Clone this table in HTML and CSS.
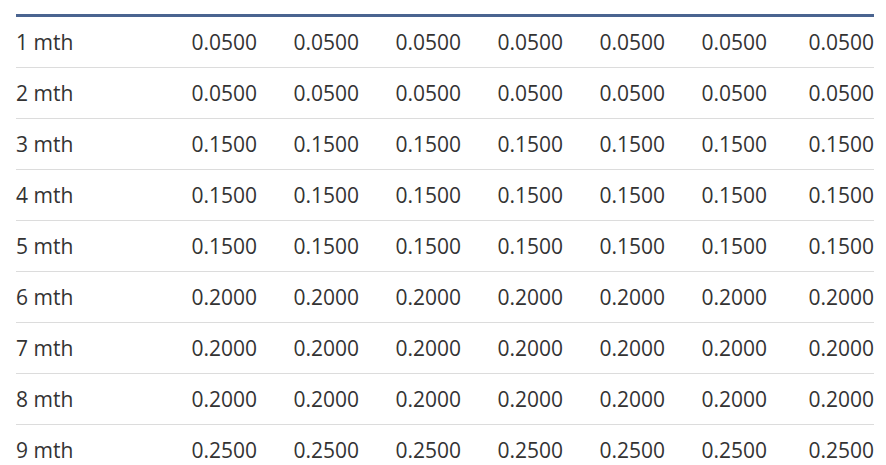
FILE: index.html
```html
<!DOCTYPE html>
<html>
<head>
<meta charset="utf-8">
<link rel="stylesheet" href="styles.css">
</head>
<body>
<table class="rates">
  <colgroup>
    <col class="c-label">
    <col class="c-num"><col class="c-num"><col class="c-num"><col class="c-num"><col class="c-num"><col class="c-num"><col class="c-num">
  </colgroup>
  <tbody>
    <tr><td>1 mth</td><td>0.0500</td><td>0.0500</td><td>0.0500</td><td>0.0500</td><td>0.0500</td><td>0.0500</td><td>0.0500</td></tr>
    <tr><td>2 mth</td><td>0.0500</td><td>0.0500</td><td>0.0500</td><td>0.0500</td><td>0.0500</td><td>0.0500</td><td>0.0500</td></tr>
    <tr><td>3 mth</td><td>0.1500</td><td>0.1500</td><td>0.1500</td><td>0.1500</td><td>0.1500</td><td>0.1500</td><td>0.1500</td></tr>
    <tr><td>4 mth</td><td>0.1500</td><td>0.1500</td><td>0.1500</td><td>0.1500</td><td>0.1500</td><td>0.1500</td><td>0.1500</td></tr>
    <tr><td>5 mth</td><td>0.1500</td><td>0.1500</td><td>0.1500</td><td>0.1500</td><td>0.1500</td><td>0.1500</td><td>0.1500</td></tr>
    <tr><td>6 mth</td><td>0.2000</td><td>0.2000</td><td>0.2000</td><td>0.2000</td><td>0.2000</td><td>0.2000</td><td>0.2000</td></tr>
    <tr><td>7 mth</td><td>0.2000</td><td>0.2000</td><td>0.2000</td><td>0.2000</td><td>0.2000</td><td>0.2000</td><td>0.2000</td></tr>
    <tr><td>8 mth</td><td>0.2000</td><td>0.2000</td><td>0.2000</td><td>0.2000</td><td>0.2000</td><td>0.2000</td><td>0.2000</td></tr>
    <tr><td>9 mth</td><td>0.2500</td><td>0.2500</td><td>0.2500</td><td>0.2500</td><td>0.2500</td><td>0.2500</td><td>0.2500</td></tr>
  </tbody>
</table>
</body>
</html>
```
FILE: styles.css
```css
html, body {
  margin: 0;
  background: #fff;
}
body {
  padding: 14px 12px 0 16px;
  font-family: "Open Sans", "Liberation Sans", sans-serif;
  color: #333;
}
.rates {
  width: 858px;
  border-collapse: collapse;
  table-layout: fixed;
  border-top: 3px solid #4a6490;
  font-size: 21px;
}
.c-label { width: 144px; }
.c-num { width: 102px; }
.rates td {
  padding: 11px 5px 11px 0;
  line-height: 28px;
  text-align: right;
  border-bottom: 1px solid #dcdcdc;
  white-space: nowrap;
}
.rates td:first-child {
  text-align: left;
  padding-left: 0;
}
.rates td:last-child {
  padding-right: 0;
}
```
